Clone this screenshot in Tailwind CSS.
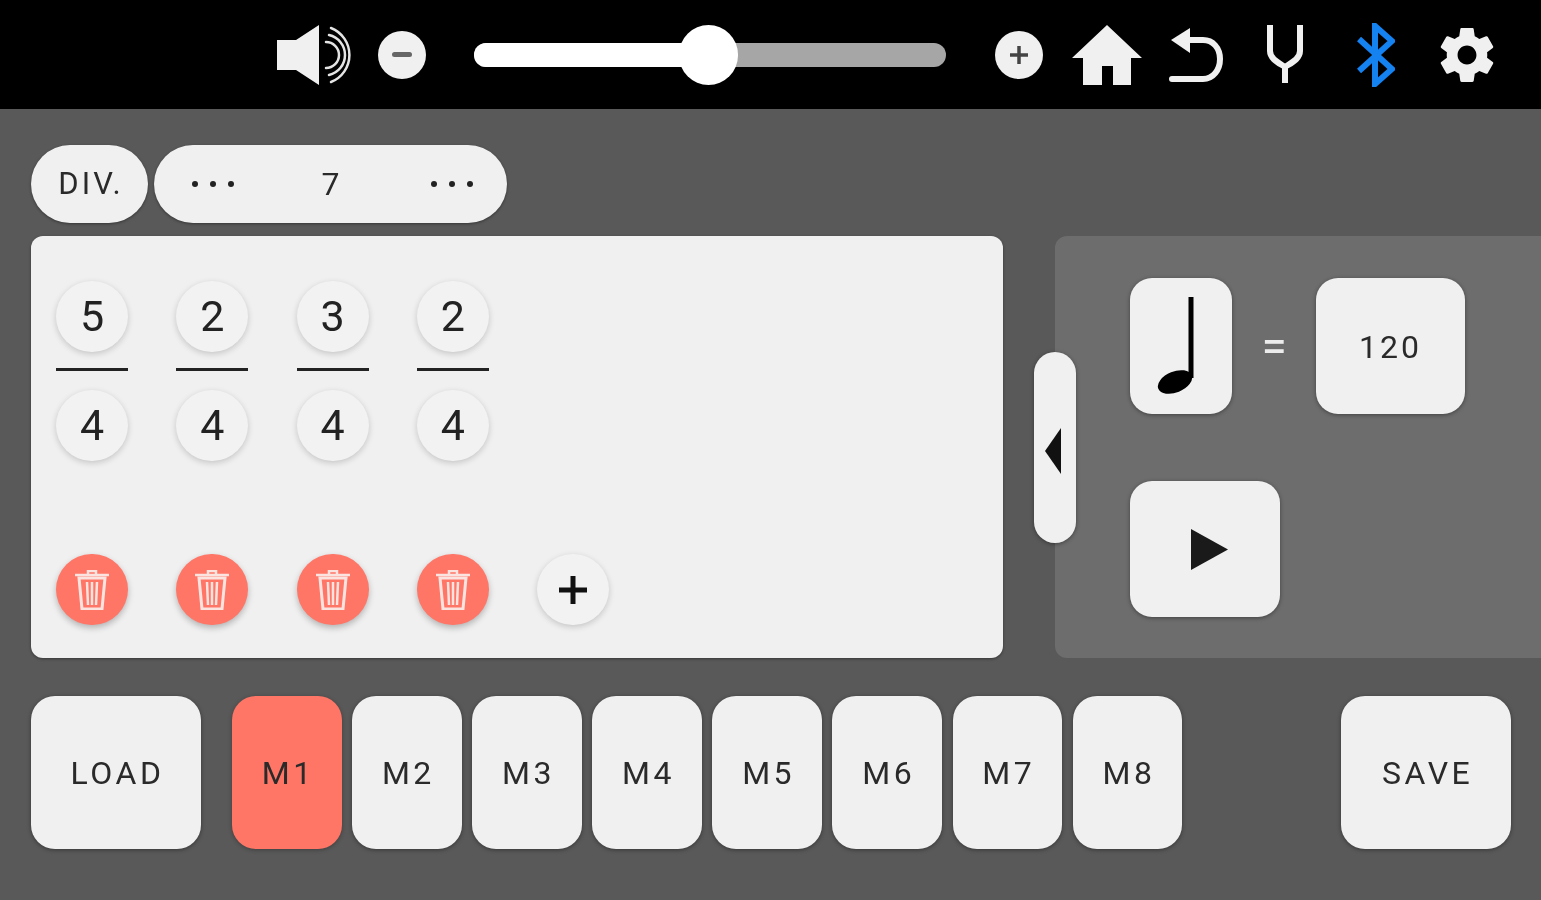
<!DOCTYPE html>
<html lang="en">
<head>
    <meta charset="UTF-8">
    <title>Metronome</title>
    <script src="https://cdn.jsdelivr.net/npm/@tailwindcss/browser@4"></script>
</head>
<body class="w-[1541px] h-[900px] overflow-hidden bg-[#595959] font-['Roboto',sans-serif] text-[#2a2a2a]">
<div class="blur-[0.5px]">
    <!-- top bar -->
    <header class="h-[109px] bg-black flex items-center pl-[277px]">
        <svg class="w-[74px] h-[62px]" viewBox="0 0 74 62">
            <path d="M0 16H19L42 1V61L19 46H0Z" fill="#f0f0f0"/>
            <g fill="none" stroke="#e4e4e4" stroke-width="2.5" stroke-linecap="round">
                <path d="M49 18A13 13 0 0 1 49 44"/>
                <path d="M52 11A20.5 20.5 0 0 1 52 51"/>
                <path d="M54 4A29 29 0 0 1 54 58"/>
            </g>
        </svg>
        <button class="ml-[27px] w-12 h-12 rounded-full bg-[#f0f0f0] flex items-center justify-center">
            <span class="w-[20px] h-[5px] bg-[#666] rounded-sm"></span>
        </button>
        <div class="ml-[48px] w-[472px] h-6 rounded-full bg-[#a6a6a6] relative">
            <div class="w-[234px] h-6 rounded-l-full bg-white"></div>
            <div class="absolute left-[205px] -top-[18px] w-[59px] h-[60px] rounded-full bg-white"></div>
        </div>
        <button class="ml-[49px] w-12 h-12 rounded-full bg-[#f0f0f0] flex items-center justify-center">
            <svg class="w-5 h-5" viewBox="0 0 20 20"><path d="M10 1V19M1 10H19" stroke="#444" stroke-width="3.5"/></svg>
        </button>
        <svg class="ml-[29px] w-[70px] h-[60px]" viewBox="0 0 70 60">
            <path d="M35 0L70 33H59V60H41V41H30V60H11V33H0Z" fill="#f0f0f0"/>
        </svg>
        <svg class="ml-[25px] w-[56px] h-[56px]" viewBox="0 0 56 56">
            <path d="M20 13H36C46 13 53 21 53 32C53 43 46 52 36 52H5" fill="none" stroke="#f0f0f0" stroke-width="6" stroke-linecap="round"/>
            <path d="M23 1V26L4 13Z" fill="#f0f0f0"/>
        </svg>
        <svg class="ml-[42px] w-[40px] h-[60px]" viewBox="0 0 40 60">
            <path d="M5 0V26C5 34 14 38 20 42C26 38 35 34 35 26V0M20 42V58" fill="none" stroke="#f0f0f0" stroke-width="6"/>
        </svg>
        <svg class="ml-[52px] w-[38px] h-[64px]" viewBox="0 0 38 64">
            <path d="M2 16L35 46L18 61V3L35 18L2 48" fill="none" stroke="#1482f0" stroke-width="6"/>
        </svg>
        <svg class="ml-[45px] w-[54px] h-[54px]" viewBox="2 2 20 20">
            <path fill-rule="evenodd" fill="#f0f0f0" d="M19.43 12.98c.04-.32.07-.64.07-.98s-.03-.66-.07-.98l2.11-1.65c.19-.15.24-.42.12-.64l-2-3.46c-.12-.22-.39-.3-.61-.22l-2.49 1c-.52-.4-1.08-.73-1.69-.98l-.38-2.65C14.46 2.18 14.25 2 14 2h-4c-.25 0-.46.18-.49.42l-.38 2.65c-.61.25-1.17.59-1.69.98l-2.49-1c-.23-.09-.49 0-.61.22l-2 3.46c-.13.22-.07.49.12.64l2.11 1.65c-.04.32-.07.65-.07.98s.03.66.07.98l-2.11 1.65c-.19.15-.24.42-.12.64l2 3.46c.12.22.39.3.61.22l2.49-1c.52.4 1.08.73 1.69.98l.38 2.65c.03.24.24.42.49.42h4c.25 0 .46-.18.49-.42l.38-2.65c.61-.25 1.17-.59 1.69-.98l2.49 1c.23.09.49 0 .61-.22l2-3.46c.12-.22.07-.49-.12-.64l-2.11-1.65zM12 15.5c-1.93 0-3.5-1.57-3.5-3.5s1.57-3.5 3.5-3.5 3.5 1.57 3.5 3.5-1.57 3.5-3.5 3.5z"/>
        </svg>
    </header>

    <main class="relative pt-[36px] pl-[31px]">
        <!-- division -->
        <div class="flex gap-[6px] h-[78px]">
            <button class="w-[117px] rounded-[39px] bg-[#f0f0f0] text-[31px] tracking-[3px] pl-[3px] shadow-[0_1px_3px_rgba(0,0,0,0.4)]">DIV.</button>
            <div class="w-[353px] rounded-[39px] bg-[#f0f0f0] grid grid-cols-[118px_120px_120px] items-center justify-items-center shadow-[0_1px_3px_rgba(0,0,0,0.4)]">
                <span class="flex gap-[12px]"><i class="w-1.5 h-1.5 rounded-full bg-[#222]"></i><i class="w-1.5 h-1.5 rounded-full bg-[#222]"></i><i class="w-1.5 h-1.5 rounded-full bg-[#222]"></i></span>
                <span class="text-[32px] pr-[3px]">7</span>
                <span class="flex gap-[12px]"><i class="w-1.5 h-1.5 rounded-full bg-[#222]"></i><i class="w-1.5 h-1.5 rounded-full bg-[#222]"></i><i class="w-1.5 h-1.5 rounded-full bg-[#222]"></i></span>
            </div>
        </div>

        <div class="mt-[13px] flex h-[422px]">
            <!-- measures -->
            <section class="w-[972px] rounded-[12px] bg-[#f0f0f0] pl-[25px] pt-[45px] shadow-[0_1px_3px_rgba(0,0,0,0.4)]">
                <div class="flex gap-[48.3px] text-[43px] leading-none text-[#222]">
                    <div class="w-[72px] flex flex-col items-center">
                        <div class="w-[72px] h-[71px] rounded-full bg-[#f2f2f2] shadow-[0_2px_6px_rgba(0,0,0,0.18)] flex items-center justify-center">5</div>
                        <div class="w-[72px] h-[3px] bg-[#222] mt-[16px] mb-[19px]"></div>
                        <div class="w-[72px] h-[71px] rounded-full bg-[#f2f2f2] shadow-[0_2px_6px_rgba(0,0,0,0.18)] flex items-center justify-center">4</div>
                    </div>
                    <div class="w-[72px] flex flex-col items-center">
                        <div class="w-[72px] h-[71px] rounded-full bg-[#f2f2f2] shadow-[0_2px_6px_rgba(0,0,0,0.18)] flex items-center justify-center">2</div>
                        <div class="w-[72px] h-[3px] bg-[#222] mt-[16px] mb-[19px]"></div>
                        <div class="w-[72px] h-[71px] rounded-full bg-[#f2f2f2] shadow-[0_2px_6px_rgba(0,0,0,0.18)] flex items-center justify-center">4</div>
                    </div>
                    <div class="w-[72px] flex flex-col items-center">
                        <div class="w-[72px] h-[71px] rounded-full bg-[#f2f2f2] shadow-[0_2px_6px_rgba(0,0,0,0.18)] flex items-center justify-center">3</div>
                        <div class="w-[72px] h-[3px] bg-[#222] mt-[16px] mb-[19px]"></div>
                        <div class="w-[72px] h-[71px] rounded-full bg-[#f2f2f2] shadow-[0_2px_6px_rgba(0,0,0,0.18)] flex items-center justify-center">4</div>
                    </div>
                    <div class="w-[72px] flex flex-col items-center">
                        <div class="w-[72px] h-[71px] rounded-full bg-[#f2f2f2] shadow-[0_2px_6px_rgba(0,0,0,0.18)] flex items-center justify-center">2</div>
                        <div class="w-[72px] h-[3px] bg-[#222] mt-[16px] mb-[19px]"></div>
                        <div class="w-[72px] h-[71px] rounded-full bg-[#f2f2f2] shadow-[0_2px_6px_rgba(0,0,0,0.18)] flex items-center justify-center">4</div>
                    </div>
                </div>
                <div class="mt-[93px] flex gap-[48.3px]">
                    <button class="w-[72px] h-[71px] rounded-full bg-[#ff7566] shadow-[0_3px_6px_rgba(0,0,0,0.25)] flex items-center justify-center">
                        <svg class="w-[36px] h-[40px]" viewBox="0 0 36 40"><path d="M1 5H35M14 4V1H22V4" fill="none" stroke="#fbe4e0" stroke-width="2.5"/><path d="M5 8H31L28 39H8Z" fill="none" stroke="#fbe4e0" stroke-width="3"/><path d="M13 12L14 35M18 12V35M23 12L22 35" stroke="#fbe4e0" stroke-width="2.5"/></svg>
                    </button>
                    <button class="w-[72px] h-[71px] rounded-full bg-[#ff7566] shadow-[0_3px_6px_rgba(0,0,0,0.25)] flex items-center justify-center">
                        <svg class="w-[36px] h-[40px]" viewBox="0 0 36 40"><path d="M1 5H35M14 4V1H22V4" fill="none" stroke="#fbe4e0" stroke-width="2.5"/><path d="M5 8H31L28 39H8Z" fill="none" stroke="#fbe4e0" stroke-width="3"/><path d="M13 12L14 35M18 12V35M23 12L22 35" stroke="#fbe4e0" stroke-width="2.5"/></svg>
                    </button>
                    <button class="w-[72px] h-[71px] rounded-full bg-[#ff7566] shadow-[0_3px_6px_rgba(0,0,0,0.25)] flex items-center justify-center">
                        <svg class="w-[36px] h-[40px]" viewBox="0 0 36 40"><path d="M1 5H35M14 4V1H22V4" fill="none" stroke="#fbe4e0" stroke-width="2.5"/><path d="M5 8H31L28 39H8Z" fill="none" stroke="#fbe4e0" stroke-width="3"/><path d="M13 12L14 35M18 12V35M23 12L22 35" stroke="#fbe4e0" stroke-width="2.5"/></svg>
                    </button>
                    <button class="w-[72px] h-[71px] rounded-full bg-[#ff7566] shadow-[0_3px_6px_rgba(0,0,0,0.25)] flex items-center justify-center">
                        <svg class="w-[36px] h-[40px]" viewBox="0 0 36 40"><path d="M1 5H35M14 4V1H22V4" fill="none" stroke="#fbe4e0" stroke-width="2.5"/><path d="M5 8H31L28 39H8Z" fill="none" stroke="#fbe4e0" stroke-width="3"/><path d="M13 12L14 35M18 12V35M23 12L22 35" stroke="#fbe4e0" stroke-width="2.5"/></svg>
                    </button>
                    <button class="w-[72px] h-[71px] rounded-full bg-[#f2f2f2] shadow-[0_2px_6px_rgba(0,0,0,0.18)] flex items-center justify-center">
                        <svg class="w-7 h-7" viewBox="0 0 28 28"><path d="M14 0V28M0 14H28" stroke="#111" stroke-width="5"/></svg>
                    </button>
                </div>
            </section>

            <!-- tempo panel -->
            <aside class="ml-[52px] flex-1 rounded-l-[12px] bg-[#6d6d6d] pl-[75px] pt-[42px]">
                <div class="flex items-center h-[136px]">
                    <button class="w-[102px] h-[136px] rounded-[22px] bg-[#f0f0f0] shadow-[0_1px_4px_rgba(0,0,0,0.4)] flex items-center justify-center">
                        <svg class="w-[50px] h-[100px]" viewBox="0 0 50 100"><path d="M35 1V82" stroke="#000" stroke-width="5" fill="none"/><ellipse cx="19" cy="86" rx="18" ry="10.5" transform="rotate(-22 19 86)" fill="#000"/></svg>
                    </button>
                    <span class="w-[84px] text-center text-[46px] leading-none text-[#ececec]">=</span>
                    <button class="w-[149px] h-[136px] rounded-[22px] bg-[#f0f0f0] shadow-[0_1px_4px_rgba(0,0,0,0.4)] text-[32px] tracking-[3px] pt-[2px]">120</button>
                </div>
                <button class="mt-[67px] w-[150px] h-[136px] rounded-[22px] bg-[#f0f0f0] shadow-[0_1px_4px_rgba(0,0,0,0.4)] flex items-center justify-center pl-[8px]">
                    <svg class="w-[37px] h-[41px]" viewBox="0 0 37 41"><path d="M0 0L37 20.5L0 41Z" fill="#1a1a1a"/></svg>
                </button>
            </aside>
        </div>

        <!-- collapse handle -->
        <button class="absolute left-[1034px] top-[243px] w-[42px] h-[191px] rounded-[21px] bg-[#f0f0f0] shadow-[0_1px_4px_rgba(0,0,0,0.4)] flex items-center justify-center pr-[4px] pt-[6px]">
            <svg class="w-4 h-[46px]" viewBox="0 0 16 46"><path d="M16 0V46L0 23Z" fill="#111"/></svg>
        </button>

        <!-- memories -->
        <div class="mt-[38px] flex h-[153px] text-[32px] tracking-[3.5px]">
            <button class="w-[170px] pl-[3px] rounded-[24px] bg-[#f0f0f0] shadow-[0_1px_4px_rgba(0,0,0,0.4)]">LOAD</button>
            <div class="ml-[31px] flex gap-[10.6px]">
                <button class="w-[109.5px] pl-[3px] rounded-[24px] bg-[#ff7566] shadow-[0_1px_4px_rgba(0,0,0,0.3)]">M1</button>
                <button class="w-[109.5px] pl-[3px] rounded-[24px] bg-[#f0f0f0] shadow-[0_1px_4px_rgba(0,0,0,0.4)]">M2</button>
                <button class="w-[109.5px] pl-[3px] rounded-[24px] bg-[#f0f0f0] shadow-[0_1px_4px_rgba(0,0,0,0.4)]">M3</button>
                <button class="w-[109.5px] pl-[3px] rounded-[24px] bg-[#f0f0f0] shadow-[0_1px_4px_rgba(0,0,0,0.4)]">M4</button>
                <button class="w-[109.5px] pl-[3px] rounded-[24px] bg-[#f0f0f0] shadow-[0_1px_4px_rgba(0,0,0,0.4)]">M5</button>
                <button class="w-[109.5px] pl-[3px] rounded-[24px] bg-[#f0f0f0] shadow-[0_1px_4px_rgba(0,0,0,0.4)]">M6</button>
                <button class="w-[109.5px] pl-[3px] rounded-[24px] bg-[#f0f0f0] shadow-[0_1px_4px_rgba(0,0,0,0.4)]">M7</button>
                <button class="w-[109.5px] pl-[3px] rounded-[24px] bg-[#f0f0f0] shadow-[0_1px_4px_rgba(0,0,0,0.4)]">M8</button>
            </div>
            <button class="ml-[159px] w-[170px] pl-[3px] rounded-[24px] bg-[#f0f0f0] shadow-[0_1px_4px_rgba(0,0,0,0.4)]">SAVE</button>
        </div>
    </main>
</div>
</body>
</html>
